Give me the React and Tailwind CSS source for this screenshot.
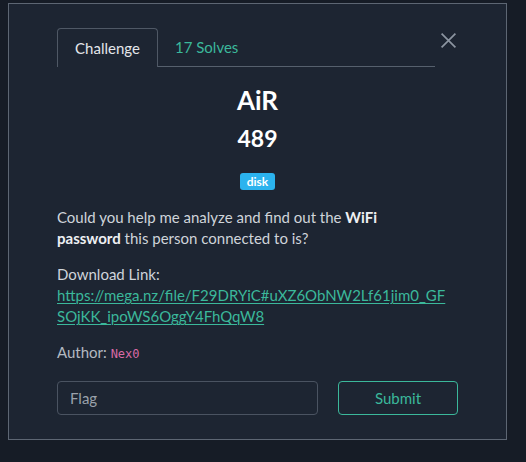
import React from "react";

const App = () => {
  return (
    <div
      className="w-[526px] h-[462px] bg-[#161c26] pt-[3px] pl-[8px] overflow-hidden"
      style={{ fontFamily: "Lato, 'Noto Sans', sans-serif" }}
    >
      {/* Modal */}
      <div className="w-[499px] h-[437px] border border-[#5d6673] bg-[#1d2532] pl-[48px] pt-[24px]">
        {/* Header: tabs + close */}
        <div className="flex items-start w-[400px]">
          <div className="flex items-end w-[378px] h-[39px] border-b border-[#56606d]">
            <div className="h-[39px] w-[101px] -mb-px border border-b-0 border-[#4f5865] rounded-t-[4px] bg-[#1d2532] flex items-center justify-center text-[15px] text-[#e4e7eb]">
              Challenge
            </div>
            <div className="h-[38px] flex items-center pl-[17px] text-[15px] text-[#3bb89b]">
              17 Solves
            </div>
          </div>
          <button className="ml-[5px] mt-[4px] w-[17px] h-[17px] text-[#8c95a1]">
            <svg viewBox="0 0 16 16" className="w-[17px] h-[17px]" fill="none" stroke="currentColor" strokeWidth="1.6">
              <path d="M1.5 1.5 L14.5 14.5 M14.5 1.5 L1.5 14.5" />
            </svg>
          </button>
        </div>

        {/* Title */}
        <div className="w-[401px] flex flex-col items-center">
          <h2 className="mt-[18px] text-[26px] leading-[30px] font-bold text-white">AiR</h2>
          <h3 className="mt-[10px] text-[23px] leading-[26px] font-bold text-white">489</h3>
          <span className="mt-[22px] h-[17px] px-[7px] rounded-[3px] bg-[#2bb3ee] text-white text-[12px] font-bold leading-[17px]">
            disk
          </span>
        </div>

        {/* Description */}
        <div className="w-[401px] mt-[17px] text-[15px] leading-[21px] text-[#cfd4da]">
          <p>
            Could you help me analyze and find out the <strong className="font-bold text-[#eef0f3]">WiFi</strong>
            <br />
            <strong className="font-bold text-[#eef0f3]">password</strong> this person connected to is?
          </p>
          <p className="mt-[15px]">Download Link:</p>
          <a href="#" className="block underline text-[#3bb89b] decoration-1 underline-offset-2">
            https://mega.nz/file/F29DRYiC#uXZ6ObNW2Lf61jim0_GF
            <br />
            SOjKK_ipoWS6OggY4FhQqW8
          </a>
          <p className="mt-[15px] text-[#b3b9c1]">
            Author:{" "}
            <span className="text-[12px] text-[#d96aa6]" style={{ fontFamily: "'DejaVu Sans Mono', monospace" }}>
              Nex0
            </span>
          </p>
        </div>

        {/* Flag form */}
        <div className="flex w-[401px] mt-[16px] gap-[20px]">
          <input
            placeholder="Flag"
            className="w-[261px] h-[34px] rounded-[4px] border border-[#4a5361] bg-transparent px-[12px] text-[15px] text-white placeholder-[#9aa1ab] outline-none"
          />
          <button className="w-[120px] h-[34px] rounded-[4px] border border-[#3bb89b] text-[#3bb89b] text-[15px]">
            Submit
          </button>
        </div>
      </div>
    </div>
  );
};

export default App;
